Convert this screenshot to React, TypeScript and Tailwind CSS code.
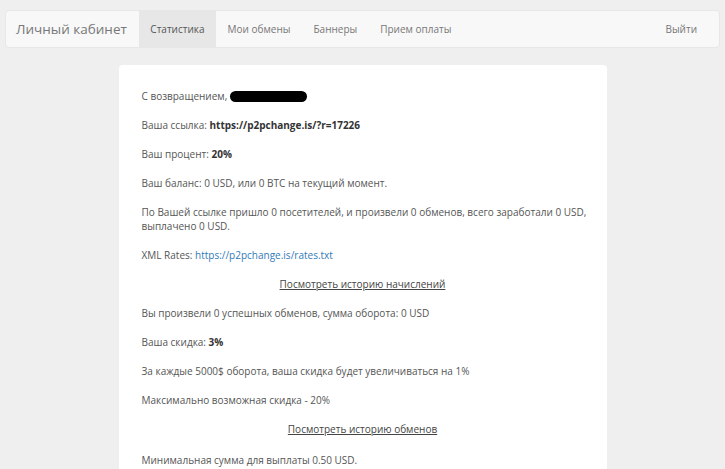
const navItems = ['Статистика', 'Мои обмены', 'Баннеры', 'Прием оплаты'];

export default function App() {
  return (
    <div
      className="min-h-[469px] bg-[#efefef] pt-[10px] text-[10px] text-[#555]"
      style={{ fontFamily: '"Open Sans", "Noto Sans", sans-serif' }}
    >
      <nav className="mx-[5px] flex h-[38px] items-stretch rounded-[4px] border border-[#e7e7e7] bg-[#f8f8f8]">
        <div className="flex items-center pl-[10px] pr-[12px] text-[13.5px] text-[#777]">Личный кабинет</div>
        {navItems.map((item, i) => (
          <div
            key={item}
            className={
              i === 0
                ? 'flex items-center bg-[#e7e7e7] px-[11.5px] text-[#555]'
                : 'flex items-center px-[11.5px] text-[#777]'
            }
          >
            {item}
          </div>
        ))}
        <div className="ml-auto flex items-center pr-[22px] text-[#777]">Выйти</div>
      </nav>

      <main className="mx-auto mt-[17px] w-[488px] rounded-[4px] bg-white pt-[24px] pr-[14px] pb-[20px] pl-[23px] leading-[14px]">
        <p className="mb-[15px]">
          С возвращением,{' '}
          <span className="inline-block h-[11px] w-[77px] translate-y-[2px] rounded-[6px] bg-black align-baseline" />
        </p>
        <p className="mb-[15px]">
          Ваша ссылка: <b className="text-[#333]">https://p2pchange.is/?r=17226</b>
        </p>
        <p className="mb-[15px]">
          Ваш процент: <b className="text-[#333]">20%</b>
        </p>
        <p className="mb-[15px]">Ваш баланс: 0 USD, или 0 BTC на текущий момент.</p>
        <p className="mb-[15px]">
          По Вашей ссылке пришло 0 посетителей, и произвели 0 обменов, всего заработали 0 USD, выплачено 0 USD.
        </p>
        <p className="mb-[15px]">
          XML Rates: <a className="text-[#337ab7]">https://p2pchange.is/rates.txt</a>
        </p>
        <p className="mb-[15px] pr-[9px] text-center">
          <a className="text-[#444] underline">Посмотреть историю начислений</a>
        </p>
        <p className="mb-[15px]">Вы произвели 0 успешных обменов, сумма оборота: 0 USD</p>
        <p className="mb-[15px]">
          Ваша скидка: <b className="text-[#333]">3%</b>
        </p>
        <p className="mb-[15px]">За каждые 5000$ оборота, ваша скидка будет увеличиваться на 1%</p>
        <p className="mb-[15px]">Максимально возможная скидка - 20%</p>
        <p className="mb-[17px] pr-[9px] text-center">
          <a className="text-[#444] underline">Посмотреть историю обменов</a>
        </p>
        <p className="mb-[15px]">Минимальная сумма для выплаты 0.50 USD.</p>
      </main>
    </div>
  );
}
